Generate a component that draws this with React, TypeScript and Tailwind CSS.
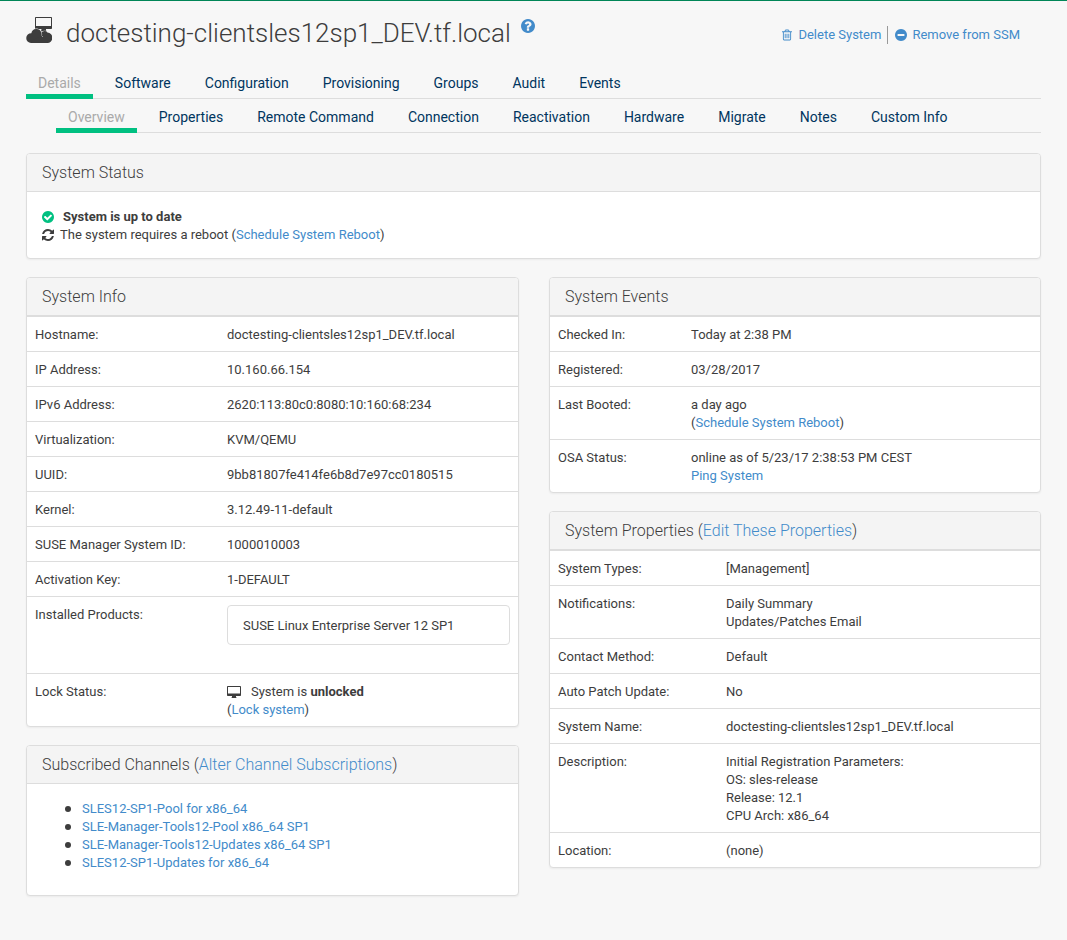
import type { ReactNode } from "react";

const CIRCLE =
  "M1664 896q0 209-103 385.5t-279.5 279.5-385.5 103-385.5-103-279.5-279.5-103-385.5 103-385.5 279.5-279.5 385.5-103 385.5 103 279.5 279.5 103 385.5z";

const CHECK =
  "M1412 734q0-28-18-46l-91-90q-19-19-45-19t-45 19l-408 407-226-226q-19-19-45-19t-45 19l-91 90q-18 18-18 46 0 27 18 45l362 362q19 19 45 19 27 0 46-19l543-543q18-18 18-45z";

const QUESTION =
  "M1024 1376v-192q0-14-9-23t-23-9h-192q-14 0-23 9t-9 23v192q0 14 9 23t23 9h192q14 0 23-9t9-23zM1280 704q0-88-55.5-163t-138.5-116-170-41q-243 0-371 213-15 24 8 42l132 100q7 6 19 6 16 0 25-12 53-68 86-92 34-24 86-24 48 0 85.5 26t37.5 59q0 38-20 61t-68 45q-63 28-115.5 86.5t-52.5 125.5v36q0 14 9 23t23 9h192q14 0 23-9t9-23q0-19 21.5-49.5t54.5-49.5q32-18 49-28.5t46-35 44.5-48 28-60.5 12.5-81z";

const MINUS =
  "M1344 960v-128q0-26-19-45t-45-19h-768q-26 0-45 19t-19 45v128q0 26 19 45t45 19h768q26 0 45-19t19-45z";

const TRASH =
  "M704 736v576q0 14-9 23t-23 9h-64q-14 0-23-9t-9-23v-576q0-14 9-23t23-9h64q14 0 23 9t9 23zm256 0v576q0 14-9 23t-23 9h-64q-14 0-23-9t-9-23v-576q0-14 9-23t23-9h64q14 0 23 9t9 23zm256 0v576q0 14-9 23t-23 9h-64q-14 0-23-9t-9-23v-576q0-14 9-23t23-9h64q14 0 23 9t9 23zm128 724v-948h-896v948q0 22 7 40.5t14.5 27 10.5 8.5h832q3 0 10.5-8.5t14.5-27 7-40.5zm-672-1076h448l-48-117q-7-9-17-11h-317q-10 2-17 11zm928 32v64q0 14-9 23t-23 9h-96v948q0 83-47 143.5t-113 60.5h-832q-66 0-113-58.5t-47-141.5v-952h-96q-14 0-23-9t-9-23v-64q0-14 9-23t23-9h309l70-167q15-37 54-63t79-26h320q40 0 79 26t54 63l70 167h309q14 0 23 9t9 23z";

const REFRESH =
  "M1511 928q0 5-1 7-64 268-268 434.5t-478 166.5q-146 0-282.5-55t-243.5-157l-129 129q-19 19-45 19t-45-19-19-45v-448q0-26 19-45t45-19h448q26 0 45 19t19 45-19 45l-137 137q71 66 161 102t187 36q134 0 250-65t186-179q11-17 53-117 8-23 30-23h192q13 0 22.5 9.5t9.5 22.5zm25-800v448q0 26-19 45t-45 19h-448q-26 0-45-19t-19-45 19-45l138-138q-148-137-349-137-134 0-250 65t-186 179q-11 17-53 117-8 23-30 23h-199q-13 0-22.5-9.5t-9.5-22.5v-7q65-268 270-434.5t480-166.5q146 0 284 55.5t245 156.5l130-129q19-19 45-19t45 19 19 45z";

function Glyph({ d, box, className }: { d: string; box: string; className: string }) {
  return (
    <svg viewBox={box} className={className} fill="currentColor" fillRule="evenodd" aria-hidden="true">
      <path d={d} />
    </svg>
  );
}

function VirtualHostIcon() {
  return (
    <svg viewBox="0 0 26 26" className="mt-[3px] size-[26px] shrink-0" fill="currentColor" aria-hidden="true">
      <path
        fillRule="evenodd"
        d="M9.800 0h15.400q.8 0 .8.800v10.400q0 .8-.8.800H9.800q-.8 0-.8-.800V.800Q9 0 9.800 0zM10 1v8h15V1z"
      />
      <path d="M15.500 12h4.500v1.500l1 1h-6z" />
      <path
        className="stroke-[#f7f7f7]"
        strokeWidth="1"
        paintOrder="stroke"
        d="M14 26V18.500a4.300 4.300 0 0 1 7.500-2.900a5.200 5.200 0 0 1-.6 10.400z"
      />
      <path
        className="stroke-[#f7f7f7]"
        strokeWidth="1"
        paintOrder="stroke"
        d="M5 26a4.900 4.900 0 0 1 .3-9.800a5.200 5.200 0 0 1 10-.7q.6 1.400.2 3q1.500 1.500 1 4z"
      />
      <path d="M4.500 24H21.500v2H5z" />
      <path d="M13 20h5v6H5l2-3z" />
    </svg>
  );
}

function DesktopIcon() {
  return (
    <svg viewBox="0 0 14 12" className="mr-2.5 inline-block h-3 w-3.5 align-[-2px]" fill="currentColor" aria-hidden="true">
      <path
        fillRule="evenodd"
        d="M.8 0h12.400q.8 0 .8.800v8.400q0 .8-.8.800H9v1l.7 1H4.300l.7-1v-1H.8Q0 10 0 9.200V.800Q0 0 .8 0zM1 1v6.500h12V1z"
      />
    </svg>
  );
}

function Link({ children }: { children: ReactNode }) {
  return (
    <a href="#" className="text-[#428bca] hover:underline">
      {children}
    </a>
  );
}

function Tabs({ label, items, className }: { label: string; items: string[]; className: string }) {
  return (
    <nav aria-label={label} className={className}>
      <ul className="flex h-[34px] gap-2.5 border-b border-[#ddd] text-sm">
        {items.map((item, i) => (
          <li key={item} className="-mb-px">
            <a
              href="#"
              aria-current={i === 0 ? "page" : undefined}
              className={
                i === 0
                  ? "block h-[34px] border-b-5 border-[#00c081] px-3 pt-2 leading-5 text-[#aaa]"
                  : "block h-[34px] px-3 pt-2 leading-5 text-[#00355e]"
              }
            >
              {item}
            </a>
          </li>
        ))}
      </ul>
    </nav>
  );
}

function Panel({ title, children }: { title: ReactNode; children: ReactNode }) {
  return (
    <section className="overflow-hidden rounded-sm border border-[#ddd] bg-white shadow-xs">
      <h2 className="border-b border-[#ddd] bg-[#f4f4f4] px-[15px] pt-[9px] pb-2 text-base leading-5 font-light">
        {title}
      </h2>
      {children}
    </section>
  );
}

function InfoTable({ rows, labelWidth }: { rows: [string, ReactNode][]; labelWidth: string }) {
  return (
    <table className="w-full table-fixed">
      <tbody>
        {rows.map(([name, value]) => (
          <tr key={name} className="border-t border-[#ddd] align-top">
            <th scope="row" className={`${labelWidth} px-2 pt-[9px] pb-[7px] text-left font-normal`}>
              {name}
            </th>
            <td className="px-2 pt-[9px] pb-[7px]">{value}</td>
          </tr>
        ))}
      </tbody>
    </table>
  );
}

const systemInfo: [string, ReactNode][] = [
  ["Hostname:", "doctesting-clientsles12sp1_DEV.tf.local"],
  ["IP Address:", "10.160.66.154"],
  ["IPv6 Address:", "2620:113:80c0:8080:10:160:68:234"],
  ["Virtualization:", "KVM/QEMU"],
  ["UUID:", "9bb81807fe414fe6b8d7e97cc0180515"],
  ["Kernel:", "3.12.49-11-default"],
  ["SUSE Manager System ID:", "1000010003"],
  ["Activation Key:", "1-DEFAULT"],
  [
    "Installed Products:",
    <ul className="-mt-px mb-[21px]">
      <li className="rounded-sm border border-[#ddd] px-[15px] pt-[11px] pb-[9px]">
        SUSE Linux Enterprise Server 12 SP1
      </li>
    </ul>,
  ],
  [
    "Lock Status:",
    <>
      <DesktopIcon />
      System is <strong className="font-bold">unlocked</strong>
      <br />(<Link>Lock system</Link>)
    </>,
  ],
];

const systemEvents: [string, ReactNode][] = [
  ["Checked In:", "Today at 2:38 PM"],
  ["Registered:", "03/28/2017"],
  [
    "Last Booted:",
    <>
      a day ago
      <br />(<Link>Schedule System Reboot</Link>)
    </>,
  ],
  [
    "OSA Status:",
    <>
      online as of 5/23/17 2:38:53 PM CEST
      <br />
      <Link>Ping System</Link>
    </>,
  ],
];

const systemProperties: [string, ReactNode][] = [
  ["System Types:", "[Management]"],
  [
    "Notifications:",
    <>
      Daily Summary
      <br />
      Updates/Patches Email
    </>,
  ],
  ["Contact Method:", "Default"],
  ["Auto Patch Update:", "No"],
  ["System Name:", "doctesting-clientsles12sp1_DEV.tf.local"],
  [
    "Description:",
    <>
      Initial Registration Parameters:
      <br />
      OS: sles-release
      <br />
      Release: 12.1
      <br />
      CPU Arch: x86_64
    </>,
  ],
  ["Location:", "(none)"],
];

const channels = [
  "SLES12-SP1-Pool for x86_64",
  "SLE-Manager-Tools12-Pool x86_64 SP1",
  "SLE-Manager-Tools12-Updates x86_64 SP1",
  "SLES12-SP1-Updates for x86_64",
];

export default function App() {
  return (
    <div className="min-h-screen border-t border-[#008657] bg-[#f7f7f7] px-[26px] pb-11 font-['Roboto',sans-serif] text-[13px] leading-[18px] text-[#3d3d3d]">
      <header className="flex h-16 items-start pt-[13px]">
        <VirtualHostIcon />
        <h1 className="mt-px ml-3.5 text-[26px] leading-9 font-light">doctesting-clientsles12sp1_DEV.tf.local</h1>
        <a href="#" aria-label="Help" className="mt-[5px] ml-2.5 text-[#428bca]">
          <Glyph d={CIRCLE + QUESTION} box="128 128 1536 1536" className="size-3.5" />
        </a>
        <div className="mt-3 mr-[21px] ml-auto flex items-center text-[#428bca]">
          <a href="#" className="flex items-center gap-1.5 border-r border-[#999] pr-1.5">
            <Glyph d={TRASH} box="192 128 1408 1536" className="h-3 w-2.5" />
            Delete System
          </a>
          <a href="#" className="flex items-center gap-[5px] pl-[7px]">
            <Glyph d={CIRCLE + MINUS} box="128 128 1536 1536" className="size-3" />
            Remove from SSM
          </a>
        </div>
      </header>

      <Tabs
        label="System"
        className=""
        items={["Details", "Software", "Configuration", "Provisioning", "Groups", "Audit", "Events"]}
      />
      <Tabs
        label="Details"
        className="ml-[30px]"
        items={[
          "Overview",
          "Properties",
          "Remote Command",
          "Connection",
          "Reactivation",
          "Hardware",
          "Migrate",
          "Notes",
          "Custom Info",
        ]}
      />

      <main className="mt-5 flex flex-col gap-[18px]">
        <Panel title="System Status">
          <div className="px-[15px] pt-4 pb-3.5">
            <p className="flex items-center">
              <Glyph d={CIRCLE + CHECK} box="128 128 1536 1536" className="mr-[9px] size-3 text-[#00c081]" />
              <strong className="font-bold">System is up to date</strong>
            </p>
            <p className="flex items-center">
              <Glyph d={REFRESH} box="0 0 1536 1536" className="mr-1.5 size-3" />
              <span>
                The system requires a reboot (<Link>Schedule System Reboot</Link>)
              </span>
            </p>
          </div>
        </Panel>

        <div className="grid grid-cols-[493fr_492fr] items-start gap-[30px]">
          <div className="flex flex-col gap-[18px]">
            <Panel title="System Info">
              <InfoTable rows={systemInfo} labelWidth="w-48" />
            </Panel>
            <Panel
              title={
                <>
                  Subscribed Channels (<Link>Alter Channel Subscriptions</Link>)
                </>
              }
            >
              <ul className="pt-4 pr-[15px] pb-[23px] pl-[38px]">
                {channels.map((channel) => (
                  <li
                    key={channel}
                    className="flex items-center gap-[11px] before:size-1.5 before:rounded-full before:bg-[#3d3d3d]"
                  >
                    <Link>{channel}</Link>
                  </li>
                ))}
              </ul>
            </Panel>
          </div>
          <div className="flex flex-col gap-[18px]">
            <Panel title="System Events">
              <InfoTable rows={systemEvents} labelWidth="w-[133px]" />
            </Panel>
            <Panel
              title={
                <>
                  System Properties (<Link>Edit These Properties</Link>)
                </>
              }
            >
              <InfoTable rows={systemProperties} labelWidth="w-[168px]" />
            </Panel>
          </div>
        </div>
      </main>
    </div>
  );
}
